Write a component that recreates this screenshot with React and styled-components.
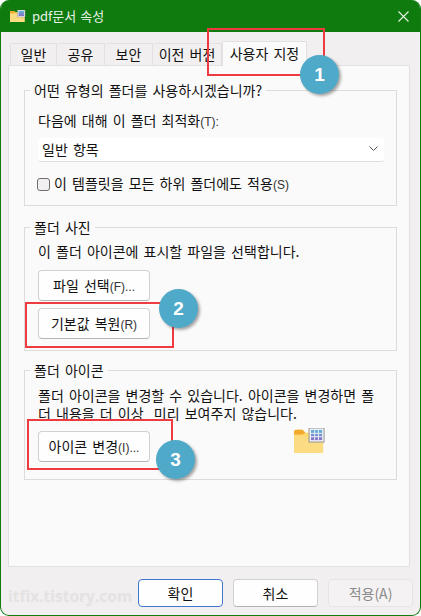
import React, { useId } from 'react';
import styled, { createGlobalStyle } from 'styled-components';

const GlobalStyle = createGlobalStyle`
  html, body { margin: 0; padding: 0; background: #fff; }
  * { box-sizing: border-box; }
`;

const Dialog = styled.div`
  position: relative;
  width: 421px;
  height: 616px;
  background: #f1efef;
  border: 1px solid #107c10;
  border-top: 0;
  border-radius: 9px;
  overflow: hidden;
  display: flex;
  flex-direction: column;
  font-family: "Noto Sans CJK KR", "Noto Sans", sans-serif;
  font-size: 14px;
  word-spacing: 2px;
  color: #111;
`;

const TitleBar = styled.div`
  height: 32px;
  background: #0f7b0f;
  display: flex;
  align-items: center;
  padding: 0 11px 0 9px;
  gap: 6px;
  color: #e8f3e8;
  flex: none;
`;

const TitleText = styled.span`
  flex: 1;
  font-size: 13px;
  word-spacing: 1px;
  padding-bottom: 2px;
`;

const Tabs = styled.div`
  display: flex;
  align-items: flex-end;
  height: 33px;
  padding-left: 9px;
  flex: none;
`;

const Tab = styled.div`
  width: ${(p) => p.$width}px;
  height: ${(p) => (p.$active ? 25 : 22)}px;
  padding-bottom: 2px;
  background: ${(p) => (p.$active ? '#fbfafa' : '#f1efef')};
  border: 1px solid #e2e0e0;
  border-bottom: 0;
  border-left-width: ${(p) => (p.$active ? 1 : 0)}px;
  border-radius: 2px 2px 0 0;
  display: flex;
  align-items: center;
  justify-content: center;
  white-space: nowrap;
  margin-bottom: ${(p) => (p.$active ? -1 : 0)}px;
  position: relative;
  &:first-child { border-left-width: 1px; }
`;

const TabPage = styled.div`
  width: 402px;
  height: 502px;
  margin-left: 7px;
  background: #fbfafa;
  border: 1px solid #e2e0e0;
  padding: 16px 12px 0 15px;
  display: flex;
  flex-direction: column;
  flex: none;
`;

const Group = styled.fieldset`
  margin: 0 0 ${(p) => p.$gap || 0}px;
  height: ${(p) => p.$height}px;
  border: 1px solid #dddbdb;
  padding: ${(p) => p.$top}px 11px 0 13px;
  min-width: 0;
  flex: none;
`;

const Legend = styled.legend`
  margin-left: -8px;
  padding: 0 4px;
  line-height: 16px;
`;

const Label = styled.div`
  line-height: 18px;
  margin-bottom: ${(p) => p.$gap || 0}px;
  word-break: break-all;
`;

const Mnemonic = styled.span`
  font-family: "Liberation Sans", Arial, sans-serif;
  font-size: 12px;
  word-spacing: 0;
  color: #333;
`;

const Select = styled.div`
  height: 24px;
  width: 346px;
  padding: 0 6px 2px 4px;
  background: #fff;
  border-bottom: 1px solid #e0dede;
  border-radius: 3px;
  display: flex;
  align-items: center;
  justify-content: space-between;
  margin-bottom: 12px;
`;

const CheckRow = styled.label`
  display: flex;
  align-items: center;
  gap: 4px;
  line-height: 18px;
  margin-left: -1px;
`;

const CheckBox = styled.span`
  width: 13px;
  height: 13px;
  background: #f2f0f0;
  border: 1px solid #6f6d6d;
  border-radius: 3px;
  flex: none;
`;

const Button = styled.button`
  width: ${(p) => p.$width || 112}px;
  height: ${(p) => p.$height || 31}px;
  display: block;
  padding: 0 0 1px;
  margin: 0 0 ${(p) => p.$gap || 0}px;
  font: inherit;
  word-spacing: inherit;
  color: ${(p) => (p.disabled ? '#8a8a8a' : '#111')};
  background: ${(p) => (p.disabled ? '#f4f2f2' : '#fefefe')};
  border: 1px solid ${(p) => (p.$primary ? '#3f77cf' : p.disabled ? '#e6e4e4' : '#d2d0d0')};
  border-bottom-color: ${(p) => (p.$primary ? '#3f77cf' : p.disabled ? '#e6e4e4' : '#b5b3b3')};
  border-radius: 4px;
  white-space: nowrap;
`;

const IconRow = styled.div`
  display: flex;
  align-items: flex-start;
  margin-top: 9px;
`;

const FolderPreview = styled.div`
  margin: -3px 0 0 144px;
  height: 26px;
`;

const Footer = styled.div`
  flex: 1;
  display: flex;
  justify-content: flex-end;
  align-items: flex-start;
  gap: 10px;
  padding: 12px 7px 0 0;
`;

const Marker = styled.div`
  position: absolute;
  left: ${(p) => p.$x}px;
  top: ${(p) => p.$y}px;
  width: ${(p) => p.$w}px;
  height: ${(p) => p.$h}px;
  border: 2px solid #ee3b3f;
  pointer-events: none;
`;

const Badge = styled.div`
  position: absolute;
  left: ${(p) => p.$x}px;
  top: ${(p) => p.$y}px;
  width: 39px;
  height: 39px;
  border-radius: 50%;
  background: #4fa9c8;
  color: #fff;
  box-shadow: 2px 2px 3px rgba(0, 0, 0, 0.35);
  display: flex;
  align-items: center;
  justify-content: center;
  font-family: "Liberation Sans", Arial, sans-serif;
  font-weight: 700;
  font-size: 19px;
`;

const Watermark = styled.div`
  position: absolute;
  left: 7px;
  top: 585px;
  font-family: "Open Sans", "Noto Sans", sans-serif;
  font-weight: 700;
  font-size: 15.5px;
  word-spacing: 0;
  color: #e4e2e2;
`;

const FolderGridIcon = ({ size = 34, mini }) => {
  const gradientId = useId();
  return (
    <svg width={size} height={size * 0.79} viewBox="0 0 34 27" fill="none">
      <defs>
        <linearGradient id={gradientId} x1="0" y1="0" x2="0" y2="1">
          <stop offset="0" stopColor="#5fb4dc" />
          <stop offset="1" stopColor="#8a6fc4" />
        </linearGradient>
      </defs>
      <path d="M0 4 a2 2 0 0 1 2-2 h7 l3 3 h17 a2 2 0 0 1 2 2 v18 a2 2 0 0 1-2 2 H2 a2 2 0 0 1-2-2z" fill="#fdd76f" />
      <path d="M0 4 a2 2 0 0 1 2-2 h7 l3 3 -3 2 H0z" fill="#f0a92c" />
      <path d="M0 9 h31 v16 a2 2 0 0 1-2 2 H2 a2 2 0 0 1-2-2z" fill="#fcdc83" />
      <rect x="16" y="0" width="16" height="15" fill="#f6f6f8" stroke="#8d8d8d" />
      <rect x="18" y="2" width="12" height="11" fill={`url(#${gradientId})`} />
      {!mini && (
        <path d="M22 2v11M26 2v11M18 5.7h12M18 9.3h12" stroke="#f1f2f8" strokeWidth="1" />
      )}
    </svg>
  );
};

const CloseIcon = () => (
  <svg width="11" height="11" viewBox="0 0 11 11" stroke="#e8f3e8" strokeWidth="1.1">
    <path d="M0.5 0.5 10.5 10.5M10.5 0.5 0.5 10.5" />
  </svg>
);

const ChevronIcon = () => (
  <svg width="9" height="5" viewBox="0 0 9 5" fill="none" stroke="#555" strokeWidth="1">
    <path d="M0.5 0.5 4.5 4.5 8.5 0.5" />
  </svg>
);

const tabs = [
  { label: '일반', width: 47 },
  { label: '공유', width: 48 },
  { label: '보안', width: 48 },
  { label: '이전 버전', width: 69 },
  { label: '사용자 지정', width: 85, active: true },
];

const markers = [
  { x: 206, y: 28, w: 118, h: 48 },
  { x: 24, y: 302, w: 149, h: 46 },
  { x: 26, y: 419, w: 146, h: 51 },
];

const badges = [
  { n: 1, x: 299, y: 55 },
  { n: 2, x: 158, y: 289 },
  { n: 3, x: 155, y: 440 },
];

export default function App() {
  return (
    <>
      <GlobalStyle />
      <Dialog>
        <TitleBar>
          <FolderGridIcon size={16} mini />
          <TitleText>pdf문서 속성</TitleText>
          <CloseIcon />
        </TitleBar>
        <Tabs>
          {tabs.map((t) => (
            <Tab key={t.label} $width={t.width} $active={t.active}>{t.label}</Tab>
          ))}
        </Tabs>
        <TabPage>
          <Group $height={124} $gap={13} $top={13}>
            <Legend>어떤 유형의 폴더를 사용하시겠습니까?</Legend>
            <Label $gap={7}>다음에 대해 이 폴더 최적화<Mnemonic>(T):</Mnemonic></Label>
            <Select>일반 항목<ChevronIcon /></Select>
            <CheckRow><CheckBox /><span>이 템플릿을 모든 하위 폴더에도 적용<Mnemonic>(S)</Mnemonic></span></CheckRow>
          </Group>
          <Group $height={132} $gap={11} $top={7}>
            <Legend>폴더 사진</Legend>
            <Label $gap={10}>이 폴더 아이콘에 표시할 파일을 선택합니다.</Label>
            <Button $gap={7}>파일 선택<Mnemonic>(F)...</Mnemonic></Button>
            <Button>기본값 복원<Mnemonic>(R)</Mnemonic></Button>
          </Group>
          <Group $height={118} $top={8}>
            <Legend>폴더 아이콘</Legend>
            <Label>폴더 아이콘을 변경할 수 있습니다. 아이콘을 변경하면 폴더 내용을 더 이상&nbsp; 미리 보여주지 않습니다.</Label>
            <IconRow>
              <Button>아이콘 변경<Mnemonic>(I)...</Mnemonic></Button>
              <FolderPreview><FolderGridIcon size={32} /></FolderPreview>
            </IconRow>
          </Group>
        </TabPage>
        <Footer>
          <Button $width={85} $height={28} $primary>확인</Button>
          <Button $width={85} $height={28}>취소</Button>
          <Button $width={85} $height={28} disabled>적용(A)</Button>
        </Footer>
        <Watermark>itfix.tistory.com</Watermark>
        {markers.map((m) => (
          <Marker key={m.y} $x={m.x} $y={m.y} $w={m.w} $h={m.h} />
        ))}
        {badges.map((b) => (
          <Badge key={b.n} $x={b.x} $y={b.y}>{b.n}</Badge>
        ))}
      </Dialog>
    </>
  );
}
